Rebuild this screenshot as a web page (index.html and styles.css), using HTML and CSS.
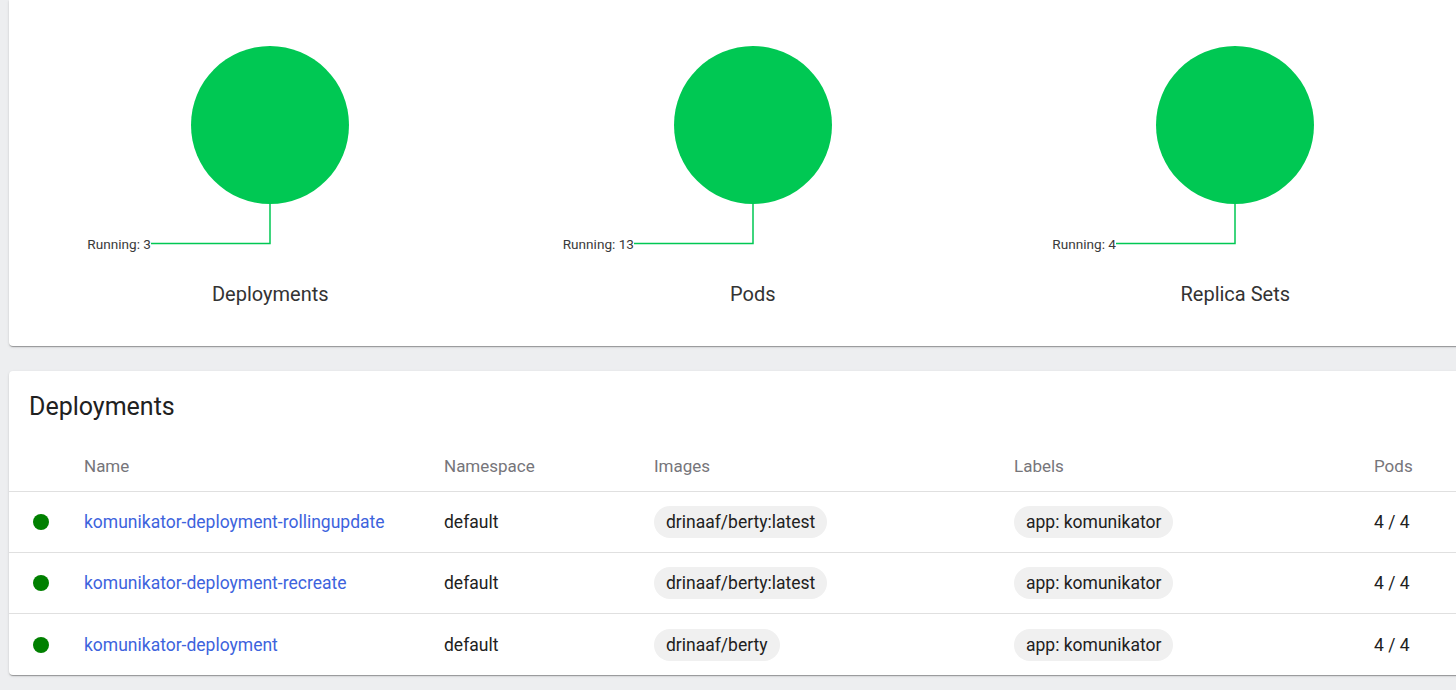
FILE: index.html
```html
<!DOCTYPE html>
<html>
<head>
<meta charset="utf-8">
<link rel="stylesheet" href="styles.css">
</head>
<body>
<div class="page">
  <section class="card charts">
    <div class="chart">
      <svg width="482" height="260" viewBox="0 0 482 260">
        <circle cx="241" cy="125" r="79" fill="#00c853"/>
        <polyline points="241,204 241,243.5 122,243.5" fill="none" stroke="#00c853" stroke-width="1.5"/>
        <text x="122" y="248.5" text-anchor="end" class="svg-label">Running: 3</text>
      </svg>
      <div class="chart-title">Deployments</div>
    </div>
    <div class="chart">
      <svg width="482" height="260" viewBox="0 0 482 260">
        <circle cx="241" cy="125" r="79" fill="#00c853"/>
        <polyline points="241,204 241,243.5 122,243.5" fill="none" stroke="#00c853" stroke-width="1.5"/>
        <text x="122" y="248.5" text-anchor="end" class="svg-label">Running: 13</text>
      </svg>
      <div class="chart-title">Pods</div>
    </div>
    <div class="chart">
      <svg width="482" height="260" viewBox="0 0 482 260">
        <circle cx="241" cy="125" r="79" fill="#00c853"/>
        <polyline points="241,204 241,243.5 122,243.5" fill="none" stroke="#00c853" stroke-width="1.5"/>
        <text x="122" y="248.5" text-anchor="end" class="svg-label">Running: 4</text>
      </svg>
      <div class="chart-title">Replica Sets</div>
    </div>
  </section>

  <section class="card list">
    <h2 class="list-title">Deployments</h2>
    <div class="table">
      <div class="row head">
        <div class="cell status"></div>
        <div class="cell">Name</div>
        <div class="cell">Namespace</div>
        <div class="cell">Images</div>
        <div class="cell">Labels</div>
        <div class="cell">Pods</div>
      </div>
      <div class="row">
        <div class="cell status"><span class="dot"></span></div>
        <div class="cell"><a class="link">komunikator-deployment-rollingupdate</a></div>
        <div class="cell">default</div>
        <div class="cell"><span class="chip">drinaaf/berty:latest</span></div>
        <div class="cell"><span class="chip">app: komunikator</span></div>
        <div class="cell">4 / 4</div>
      </div>
      <div class="row">
        <div class="cell status"><span class="dot"></span></div>
        <div class="cell"><a class="link">komunikator-deployment-recreate</a></div>
        <div class="cell">default</div>
        <div class="cell"><span class="chip">drinaaf/berty:latest</span></div>
        <div class="cell"><span class="chip">app: komunikator</span></div>
        <div class="cell">4 / 4</div>
      </div>
      <div class="row">
        <div class="cell status"><span class="dot"></span></div>
        <div class="cell"><a class="link">komunikator-deployment</a></div>
        <div class="cell">default</div>
        <div class="cell"><span class="chip">drinaaf/berty</span></div>
        <div class="cell"><span class="chip">app: komunikator</span></div>
        <div class="cell">4 / 4</div>
      </div>
    </div>
  </section>
</div>
</body>
</html>
```

FILE: styles.css
```css
html, body {
  margin: 0;
  padding: 0;
  background: #edeef0;
  overflow: hidden;
  font-family: Roboto, "Noto Sans", Arial, sans-serif;
  color: #212121;
}

.page {
  width: 1497px;
  padding: 0 0 20px 9px;
  display: flex;
  flex-direction: column;
  gap: 25px;
}

.card {
  background: #fff;
  border-radius: 4px;
  box-shadow: 0 2px 1px -1px rgba(0,0,0,0.2), 0 1px 1px 0 rgba(0,0,0,0.14), 0 1px 3px 0 rgba(0,0,0,0.12);
}

.charts {
  display: flex;
  padding: 0 20px 40px 20px;
  border-top-left-radius: 0;
  border-top-right-radius: 0;
}

.chart {
  width: 482.5px;
  display: flex;
  flex-direction: column;
  align-items: center;
}

.chart svg {
  display: block;
}

.svg-label {
  font-family: Roboto, Arial, sans-serif;
  font-size: 13.6px;
  fill: #3a3a3a;
}

.chart-title {
  margin-top: 22px;
  font-size: 20px;
  line-height: 24px;
  color: #333;
}

.list {
  padding-bottom: 0;
}

.list-title {
  margin: 0;
  padding: 20px 20px 0 20px;
  font-size: 25px;
  line-height: 32px;
  font-weight: 400;
  color: #212121;
}

.row {
  display: grid;
  grid-template-columns: 75px 360px 210px 360px 360px 1fr;
  align-items: center;
  height: 60px;
  border-top: 1px solid #e0e0e0;
  font-size: 17.5px;
}

.row:last-child {
  height: 61px;
}

.row.head {
  border-top: none;
  height: 68px;
  align-items: end;
  color: #76757a;
  font-size: 17px;
}

.row.head .cell {
  padding-bottom: 16px;
  line-height: 18px;
}

.status {
  padding-left: 24px;
  display: flex;
  align-items: center;
}

.dot {
  width: 16px;
  height: 16px;
  border-radius: 50%;
  background: #008000;
  display: inline-block;
}

.link {
  color: #3d63dd;
  text-decoration: none;
}

.chip {
  display: inline-block;
  background: #f0f0f0;
  border-radius: 16px;
  padding: 0 12px;
  line-height: 32px;
  height: 32px;
  color: #212121;
}
```
